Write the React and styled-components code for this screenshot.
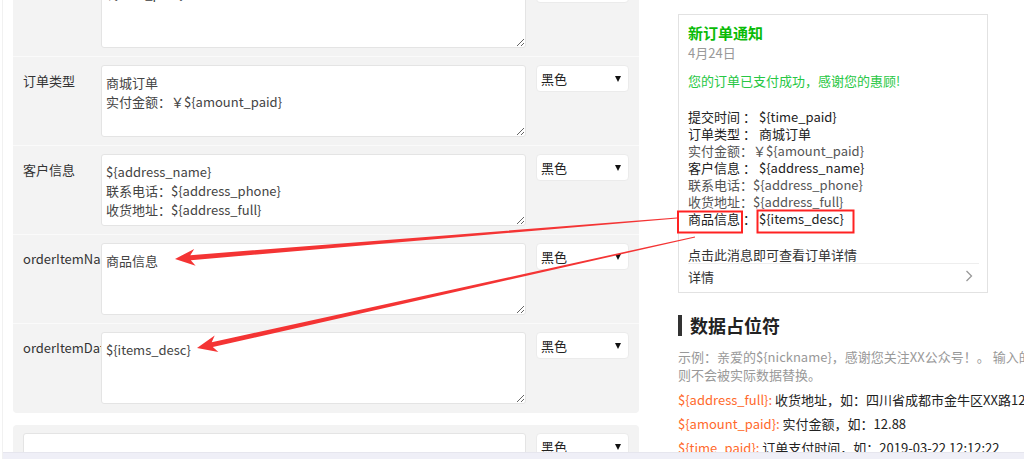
import React from 'react';
import styled, { createGlobalStyle } from 'styled-components';

const GlobalStyle = createGlobalStyle`
  html, body {
    margin: 0;
    padding: 0;
    background: #fff;
    overflow: hidden;
  }
  body {
    font-family: "Noto Sans CJK SC", "Microsoft YaHei", sans-serif;
    color: #333;
  }
`;

const Page = styled.div`
  position: relative;
  width: 1024px;
  height: 459px;
  overflow: hidden;
  border-left: 1px solid #f1f1f1;
  margin-left: 2px;
  box-sizing: border-box;
`;

const Main = styled.div`
  display: flex;
  align-items: flex-start;
`;

const Editor = styled.div`
  width: 626px;
  flex-shrink: 0;
  margin-left: 10px;
  margin-top: -32px;
`;

const Panel = styled.div`
  background: #f3f3f3;
  border-radius: 4px;
  & + & {
    margin-top: 12px;
  }
`;

const Row = styled.div`
  display: flex;
  align-items: flex-start;
  padding: 8px 10px ${p => (p.$last ? '9px' : '8px')};
  & + & {
    border-top: 1px solid #fafafa;
  }
`;

const Label = styled.div`
  width: 78px;
  flex-shrink: 0;
  padding-top: 6px;
  font-size: 13px;
  line-height: 19px;
  color: #333;
  white-space: nowrap;
  overflow: hidden;
`;

const Field = styled.textarea`
  width: ${p => p.$w}px;
  height: 72px;
  box-sizing: border-box;
  flex-shrink: 0;
  margin: 0 10px 0 0;
  padding: 7px 4px;
  border: 1px solid #e4e4e4;
  border-radius: 3px;
  background: #fff;
  font-family: "Noto Sans CJK SC", "Microsoft YaHei", sans-serif;
  font-size: 13px;
  line-height: 19px;
  color: #444;
  outline: none;
  overflow: hidden;
`;

const Select = styled.div`
  width: 93px;
  height: 27px;
  box-sizing: border-box;
  display: flex;
  align-items: center;
  justify-content: space-between;
  padding: 0 7px 0 4px;
  background: #fff;
  border: 1px solid #ebebeb;
  border-radius: 4px;
  font-size: 13px;
  color: #222;
`;

const Caret = styled.span`
  width: 0;
  height: 0;
  border-left: 3.5px solid transparent;
  border-right: 3.5px solid transparent;
  border-top: 6px solid #111;
`;

const Side = styled.div`
  width: 460px;
  flex-shrink: 0;
  margin-left: 39px;
  padding-top: 14px;
`;

const Card = styled.div`
  width: 310px;
  box-sizing: border-box;
  border: 1px solid #e2e2e2;
  padding: 8px 8px 4px 9px;
  font-size: 13px;
`;

const CardTitle = styled.div`
  font-size: 15px;
  line-height: 20px;
  font-weight: 700;
  color: #09bb07;
`;

const CardDate = styled.div`
  font-size: 13px;
  line-height: 19px;
  color: #999;
`;

const CardMsg = styled.div`
  margin-top: 10px;
  line-height: 18px;
  color: #27c744;
`;

const Details = styled.div`
  margin-top: 18px;
`;

const Line = styled.div`
  line-height: 17px;
  color: ${p => (p.$soft ? '#555' : '#222')};
  white-space: nowrap;
`;

const Colon = styled.span`
  margin-left: 3px;
`;

const ClickHint = styled.div`
  margin-top: 19px;
  line-height: 17px;
  color: #333;
`;

const CardFooter = styled.div`
  display: flex;
  align-items: center;
  justify-content: space-between;
  border-top: 1px solid #eee;
  height: 24px;
  color: #333;
  padding-right: 6px;
`;

const SectionTitle = styled.h3`
  margin: 22px 0 0;
  padding-left: 8px;
  border-left: 4px solid #333;
  font-size: 18px;
  line-height: 21px;
  font-weight: 700;
  color: #222;
`;

const Hint = styled.div`
  margin-top: 12px;
  font-size: 13px;
  line-height: 18px;
  color: #999;
  white-space: nowrap;
`;

const Placeholders = styled.div`
  margin-top: 4px;
`;

const Placeholder = styled.div`
  font-size: 13px;
  line-height: 24px;
  color: #222;
  white-space: nowrap;
`;

const Key = styled.span`
  color: #ff6a2c;
`;

const Overlay = styled.svg`
  position: absolute;
  left: -2px;
  top: 0;
  pointer-events: none;
`;

const BottomBar = styled.div`
  position: absolute;
  left: -3px;
  right: 0;
  bottom: 0;
  height: 6px;
  background: #efeff7;
  border-top: 1px solid #e6e6ee;
`;

const arrowPoints = (sx, sy, tx, ty, len = 20, half = 8.5, w0 = 1, w1 = 5) => {
  const dx = sx - tx;
  const dy = sy - ty;
  const d = Math.hypot(dx, dy);
  const ux = dx / d;
  const uy = dy / d;
  const nx = -uy;
  const ny = ux;
  const pt = (base, along, side) =>
    `${(base[0] + ux * along + nx * side).toFixed(1)},${(base[1] + uy * along + ny * side).toFixed(1)}`;
  const T = [tx, ty];
  const S = [sx, sy];
  return [
    pt(T, 0, 0),
    pt(T, len, half),
    pt(T, len * 0.78, w1 / 2),
    pt(S, 0, w0 / 2),
    pt(S, 0, -w0 / 2),
    pt(T, len * 0.78, -w1 / 2),
    pt(T, len, -half),
  ].join(' ');
};

const rows = [
  { label: '', value: '${time_paid}\n' },
  { label: '订单类型', value: '商城订单\n实付金额：￥${amount_paid}' },
  { label: '客户信息', value: '${address_name}\n联系电话：${address_phone}\n收货地址：${address_full}' },
  { label: 'orderItemName', value: '商品信息' },
  { label: 'orderItemData', value: '${items_desc}' },
];

const v = name => '${' + name + '}';

function App() {
  return (
    <Page>
      <GlobalStyle />
      <Main>
        <Editor>
          <Panel>
            {rows.map((r, i) => (
              <Row key={i} $last={i === rows.length - 1}>
                <Label>{r.label}</Label>
                <Field $w={425} defaultValue={r.value} readOnly />
                <Select>
                  黑色
                  <Caret />
                </Select>
              </Row>
            ))}
          </Panel>
          <Panel>
            <Row>
              <Field $w={503} defaultValue="" readOnly />
              <Select>
                黑色
                <Caret />
              </Select>
            </Row>
          </Panel>
        </Editor>
        <Side>
          <Card>
            <CardTitle>新订单通知</CardTitle>
            <CardDate>4月24日</CardDate>
            <CardMsg>您的订单已支付成功，感谢您的惠顾!</CardMsg>
            <Details>
              <Line>提交时间<Colon>：</Colon> {v('time_paid')}</Line>
              <Line>订单类型<Colon>：</Colon> 商城订单</Line>
              <Line $soft>实付金额：￥{v('amount_paid')}</Line>
              <Line>客户信息<Colon>：</Colon> {v('address_name')}</Line>
              <Line $soft>联系电话：{v('address_phone')}</Line>
              <Line $soft>收货地址：{v('address_full')}</Line>
              <Line>商品信息<Colon>：</Colon> {v('items_desc')}</Line>
            </Details>
            <ClickHint>点击此消息即可查看订单详情</ClickHint>
            <CardFooter>
              详情
              <svg width="8" height="12" viewBox="0 0 8 12">
                <polyline points="1.5,1 6.5,6 1.5,11" fill="none" stroke="#999" strokeWidth="1.3" />
              </svg>
            </CardFooter>
          </Card>
          <SectionTitle>数据占位符</SectionTitle>
          <Hint>
            示例：亲爱的{v('nickname')}，感谢您关注XX公众号！。 输入的内容如果不是占位符，
            <br />
            则不会被实际数据替换。
          </Hint>
          <Placeholders>
            <Placeholder>
              <Key>{v('address_full')}:</Key> 收货地址，如：四川省成都市金牛区XX路12号
            </Placeholder>
            <Placeholder>
              <Key>{v('amount_paid')}:</Key> 实付金额，如：12.88
            </Placeholder>
            <Placeholder>
              <Key>{v('time_paid')}:</Key> 订单支付时间，如：2019-03-22 12:12:22
            </Placeholder>
          </Placeholders>
        </Side>
      </Main>
      <Overlay width="1024" height="459" viewBox="0 0 1024 459">
        <rect x="677" y="211.5" width="64" height="21" fill="none" stroke="#f22" strokeWidth="2" />
        <rect x="756.5" y="210.5" width="96" height="22" fill="none" stroke="#f22" strokeWidth="2" />
        <polygon points={arrowPoints(676, 218, 174, 259)} fill="#f43434" />
        <polygon points={arrowPoints(694, 237, 196, 348)} fill="#f43434" />
      </Overlay>
      <BottomBar />
    </Page>
  );
}

export default App;
